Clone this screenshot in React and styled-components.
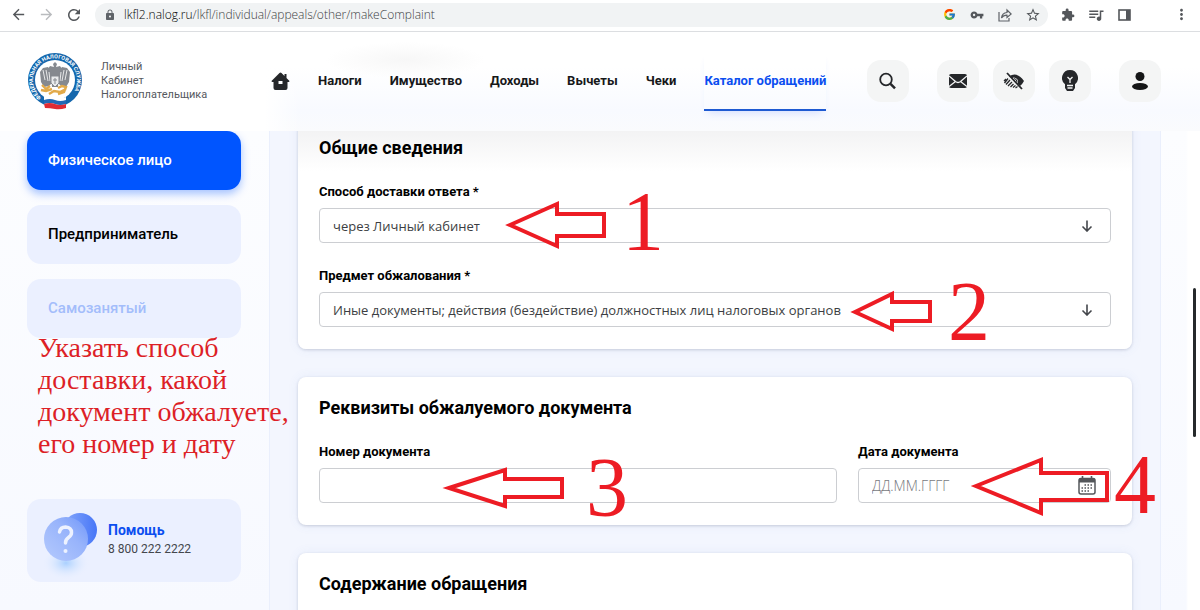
import React from 'react'
import styled, { createGlobalStyle, css } from 'styled-components'
import { FcGoogle } from 'react-icons/fc'
import {
  MdArrowBack,
  MdArrowForward,
  MdRefresh,
  MdLock,
  MdVpnKey,
  MdStarBorder,
  MdExtension,
  MdQueueMusic,
  MdMoreVert
} from 'react-icons/md'

const GlobalStyle = createGlobalStyle`
  * {
    box-sizing: border-box;
  }

  body {
    margin: 0;
    font-family: Roboto, "Liberation Sans", sans-serif;
    color: #000;
    background: #fff;
  }

  button {
    border: 0;
    padding: 0;
    font: inherit;
    color: inherit;
    background: none;
    cursor: pointer;
  }
`

const Page = styled.div`
  position: relative;
  display: flex;
  flex-direction: column;
  height: 100vh;
  overflow: hidden;
`

/* browser bar */

const BrowserBar = styled.div`
  display: flex;
  align-items: center;
  flex: none;
  height: 32px;
  padding: 0 5px 2px 4px;
  border-bottom: 1px solid #dcdee1;
  color: #5f6368;
`

const BarButton = styled.button`
  display: flex;
  align-items: center;
  justify-content: center;
  width: 28px;
  height: 24px;
  color: ${props => props.$faded ? '#b9bbbe' : '#54575b'};
`

const AddressBar = styled.div`
  display: flex;
  align-items: center;
  flex: 1;
  height: 24px;
  margin: 0 6px 0 7px;
  padding-right: 1px;
  border-radius: 12px;
  background: #f1f3f4;

  > svg {
    margin-left: 9px;
  }
`

const AddressInput = styled.div`
  flex: 1;
  margin-left: 8px;
  font: 300 12px "Open Sans", sans-serif;
  color: #3c4043;

  b {
    font-weight: 300;
    color: #000;
  }
`

const MenuButton = styled(BarButton)`
  margin-left: 29px;
`

/* site header */

const Header = styled.header`
  position: relative;
  z-index: 2;
  display: flex;
  align-items: center;
  flex: none;
  height: 99px;
  padding: 0 39px 2px 0;
  background:
    radial-gradient(ellipse 80px 18px at 405px 28px, #f7f7f7, transparent),
    linear-gradient(90deg, #fff 265px, rgba(255, 255, 255, 0) 300px),
    linear-gradient(#fff 35%, #f8faff 80%, #fafbfd);
`

const LogoLink = styled.a`
  display: flex;
  align-items: center;
  gap: 17px;
  flex: none;
  width: 271px;
  padding-left: 27px;
  font-size: 11px;
  line-height: 14px;
  color: #55585e;
  text-decoration: none;
`

const LogoText = styled.span`
  display: flex;
  flex-direction: column;
`

const Nav = styled.nav`
  display: flex;
  align-items: center;
  gap: 28px;
  flex: 1;
`

const NavLink = styled.a`
  display: flex;
  align-items: center;
  height: 60px;
  border-top: 2px solid transparent;
  border-bottom: 2px solid transparent;
  font-size: 13px;
  font-weight: 700;
  white-space: nowrap;
  color: #17181a;
  text-decoration: none;

  ${props => props.$active && css`
    color: #0b4ef0;
    border-bottom-color: #1e5ad2;
    box-shadow: 0 6px 8px -4px rgba(40, 90, 255, 0.16);
  `}
`

const Tools = styled.div`
  display: flex;
  gap: 28px;
`

const ToolGroup = styled.div`
  display: flex;
  gap: 14px;
`

const ToolButton = styled.button`
  display: flex;
  align-items: center;
  justify-content: center;
  width: 42px;
  height: 42px;
  border-radius: 14px;
  background: #f4f5f5;
`

/* body */

const Body = styled.div`
  display: flex;
  flex: 1;
  min-height: 0;
  padding-right: 39px;
  background: linear-gradient(90deg, rgba(255, 255, 255, 0) calc(100% - 14px), #fff calc(100% - 12px)), linear-gradient(#fcfdff, #f7f9ff);
`

const Sidebar = styled.aside`
  display: flex;
  flex-direction: column;
  gap: 15px;
  flex: none;
  width: 269px;
  padding: 0 28px 0 27px;
`

const RoleButton = styled.button`
  height: 59px;
  padding: 0 21px 2px;
  border-radius: 14px;
  font-size: 15px;
  font-weight: 500;
  text-align: left;
  background: #ebf0ff;

  &:disabled {
    color: #a3bdfb;
  }

  ${props => props.$active && css`
    color: #fff;
    background: #0055ff;
    box-shadow: 0 4px 9px rgba(0, 85, 255, 0.35);
  `}
`

const HelpCard = styled.a`
  display: flex;
  align-items: center;
  height: 83px;
  margin-top: 146px;
  padding-left: 15px;
  border-radius: 14px;
  background: #ebf0ff;
  text-decoration: none;
`

const HelpText = styled.span`
  display: flex;
  flex-direction: column;
  padding-bottom: 4px;
  font-size: 12px;
  line-height: 18px;
  color: #44474d;

  b {
    font-size: 14px;
    line-height: 20px;
    color: #0b4ef0;
  }
`

const Content = styled.main`
  flex: 1;
  min-width: 0;
  overflow: hidden;
  padding: 0 28px;
  border: 1px solid #eaeffc;
  border-width: 0 1px;
  background: #f3f6fe;
`

const Cards = styled.form`
  display: flex;
  flex-direction: column;
  gap: 28px;
  margin-top: -14px;
`

const Card = styled.section`
  padding: 19px 21px 22px;
  border-radius: 8px;
  background: #fff;
  box-shadow: 0 1px 3px rgba(50, 60, 90, 0.2), 0 0 12px rgba(80, 110, 200, 0.08);

  &:first-child {
    background: linear-gradient(#f3f3f4 14px, #fff 54px);
  }
`

const CardTitle = styled.h2`
  margin: 0 0 24px;
  font-size: 18px;
  line-height: 24px;
  font-weight: 700;
`

const Fields = styled.div`
  display: flex;
  flex-direction: ${props => props.$inline ? 'row' : 'column'};
  gap: ${props => props.$inline ? '21px' : '25px'};
`

const Field = styled.div`
  display: flex;
  flex-direction: column;
  gap: 8px;
  flex: ${props => props.$width ? `0 0 ${props.$width}` : '1'};
`

const Label = styled.label`
  font-size: 13px;
  line-height: 16px;
  font-weight: 700;
`

const Control = styled.div`
  display: grid;
  align-items: center;

  > * {
    grid-area: 1 / 1;
  }

  > svg {
    justify-self: end;
    margin-right: 15px;
    pointer-events: none;
  }
`

const controlStyle = css`
  width: 100%;
  height: 35px;
  padding: 0 13px;
  border: 1px solid #ccced2;
  border-radius: 4px;
  background: #fff;
  appearance: none;
`

const Input = styled.input`
  ${controlStyle}
  font: 300 14px "Open Sans", sans-serif;

  &::placeholder {
    color: #77797d;
    opacity: 1;
  }
`

const Select = styled.select`
  ${controlStyle}
  font: 13px "Open Sans", sans-serif;
  color: #3c3e42;
`

const ScrollThumb = styled.div`
  position: absolute;
  top: 288px;
  right: 4px;
  width: 3px;
  height: 149px;
  border-radius: 2px;
  background: #26292b;
`

/* red marks over the page */

const Note = styled.p`
  position: absolute;
  z-index: 3;
  top: 332px;
  left: 38px;
  margin: 0;
  font: 28px/32px "Liberation Serif", serif;
  color: #dd1f27;
  white-space: pre-line;
`

const Marks = styled.svg`
  position: absolute;
  z-index: 3;
  top: 0;
  left: 0;
  pointer-events: none;

  polygon {
    fill: none;
    stroke: #ed1c24;
    stroke-width: 4;
  }

  text {
    font: 84px "Liberation Serif", serif;
    fill: #ed1c24;
  }
`

const marks = [
  { digit: 1, x: 622, y: 250, points: '510,225 557,204 557,214 604,214 604,236 557,236 557,246' },
  { digit: 2, x: 948, y: 340, points: '855,312 892,294 892,302 930,302 930,321 892,321 892,329' },
  { digit: 3, x: 586, y: 516, points: '449,488 505,470 505,479 562,479 562,497 505,497 505,506' },
  { digit: 4, x: 1114, y: 513, points: '976,486 1041,460 1041,473 1107,473 1107,500 1041,500 1041,513' }
]

const links = ['Налоги', 'Имущество', 'Доходы', 'Вычеты', 'Чеки', 'Каталог обращений']

const Emblem = () => (
  <svg width="57" height="58" viewBox="0 0 57 58">
    <circle cx="28" cy="28" r="27" fill="#1467ad" />
    <circle cx="28" cy="28" r="20" fill="#fff" />
    <path id="ring" d="M14.200 45.500A22 22 0 1 1 41.800 45.500" fill="none" />
    <text fontSize="5.500" fontWeight="700" fill="#fff">
      <textPath href="#ring">ФЕДЕРАЛЬНАЯ НАЛОГОВАЯ СЛУЖБА</textPath>
    </text>
    <g fill="#85898f">
      <path d="M25 20l-4-5-5 1-3 4 1 10 3 5 5-1 3-3z" />
      <path d="M31 20l4-5 5 1 3 4-1 10-3 5-5-1-3-3z" />
      <path d="M28 10l2 2-1 3 4-1 2 3-3 4-1 14h-6l-1-14-3-4 2-3 4 1-1-3z" />
    </g>
    <path d="M16 18l2 10M19 18l2 11M22 20l1 9M40 18l-2 10M37 18l-2 11M34 20l-1 9" stroke="#fff" strokeWidth="0.8" />
    <path d="M24 24h8v7l-4 4-4-4z" fill="#e8eaec" stroke="#85898f" />
    <path d="M28 26v6M26 28h4" stroke="#85898f" />
    <path d="M15 33l4 4 4-3M14 38l5 1 6-2M22 42l5-3 6 1 6-3M31 36l4-2 4 1-2 5-6 2" fill="none" stroke="#e2aa4a" strokeWidth="2.4" />
    <path d="M17 45q6-2 11 0t11 0v10q-6 3-11 1t-11 0z" fill="#fff" />
    <path d="M17 48q6-2 11 0t11 0v4q-6 2-11 0t-11 0z" fill="#2369b5" />
    <path d="M17 52q6-2 11 0t11 0v4q-6 2-11 1t-10-1z" fill="#df2b33" />
  </svg>
)

const HomeIcon = () => (
  <svg width="19" height="18" viewBox="0 0 18 18" fill="#25272a">
    <path fillRule="evenodd" d="M8 1Q9 0 10 1L13 4V2h2v4l3 3q0 1-1 1h-1v6q0 2-2 2H4q-2 0-2-2v-6H1q-1 0-1-1zM7 9v3h4V9z" />
  </svg>
)

const SearchIcon = () => (
  <svg width="18" height="18" viewBox="0 0 18 18" fill="none" stroke="#25272a" strokeWidth="1.8">
    <circle cx="7" cy="7.500" r="5.800" />
    <path d="M11.500 11.800l4.500 4.500" strokeWidth="2.400" />
  </svg>
)

const MailIcon = () => (
  <svg width="18" height="14" viewBox="0 0 18 14">
    <rect width="18" height="14" rx="2" fill="#25272a" />
    <path d="M0 2l6.5 5.5q2.5 2 5 0L18 2M0 12.5l6.5-5M18 12.5l-6.5-5" fill="none" stroke="#f4f5f5" strokeWidth="1.3" />
  </svg>
)

const EyeIcon = () => (
  <svg width="22" height="18" viewBox="0 0 22 18" fill="none" stroke="#25272a">
    <path d="M6 4.5Q14-1 21 9q-1.500 3-4 5l-2.500-2.500q1.500-4-2-5.500Q10.500 5 9 6.500z" fill="#25272a" stroke="none" />
    <path d="M1 9l2-2M1.500 11L5 6.500M3 12.500L7 8M5 14l4-4M7.500 15l3-3M10 15.500l2.500-2M12.500 16l2-1.500" strokeWidth="1.300" />
    <path d="M4 1l15 16" strokeWidth="1.800" />
    <path d="M11 6.500q3 .5 3 3.500" strokeWidth="1" />
  </svg>
)

const BulbIcon = () => (
  <svg width="16" height="22" viewBox="0 0 16 22">
    <path d="M8 0a8 8 0 0 1 5 14.200V18l-2 3H5l-2-3v-3.800A8 8 0 0 1 8 0z" fill="#25272a" />
    <path d="M5.500 7L8 9.500 10.500 7M8 9.500V13M5 15.500h6M5.500 18h5" fill="none" stroke="#f4f5f5" strokeWidth="1.300" />
  </svg>
)

const PersonIcon = () => (
  <svg width="18" height="18" viewBox="0 0 18 18" fill="#151617">
    <circle cx="9" cy="4.500" r="4.500" />
    <ellipse cx="9" cy="14.500" rx="8" ry="3.500" />
  </svg>
)

const ShareIcon = () => (
  <svg width="14" height="14" viewBox="0 0 14 14" fill="none" stroke="#5f6368" strokeWidth="1.200">
    <path d="M1 4v9h10v-3" />
    <path d="M3.500 10Q4 5 9 4.500V2l4.200 4L9 9.500V7.200Q5.500 7 3.500 10z" />
  </svg>
)

const PanelIcon = () => (
  <svg width="13" height="12" viewBox="0 0 13 12">
    <rect x="1" y="1" width="11" height="10" fill="none" stroke="#54575b" strokeWidth="1.600" />
    <rect x="8" y="1" width="4" height="10" fill="#54575b" />
  </svg>
)

const DownIcon = () => (
  <svg width="18" height="12" viewBox="0 0 18 12" fill="none" stroke="#44474c" strokeWidth="1.600">
    <path d="M9 0.500v10.500M4.500 6.500L9 11l4.500-4.500" />
  </svg>
)

const CalendarIcon = () => (
  <svg width="18" height="19" viewBox="0 0 18 19" fill="none" stroke="#54575b">
    <rect x="1" y="2.500" width="16" height="15.500" rx="2" strokeWidth="1.500" />
    <path d="M1 4.500h16" strokeWidth="4" />
    <path d="M4.500 0v4M13.500 0v4" strokeWidth="1.600" />
    <path d="M6.500 9h9M3.500 12h12M3.500 15h8" strokeWidth="1.500" strokeDasharray="1.500 1.500" />
  </svg>
)

const HelpIcon = () => (
  <svg width="66" height="83" viewBox="0 0 66 83">
    <defs>
      <linearGradient id="back" x1="0" x2="1">
        <stop offset="0" stopColor="#86a8fb" />
        <stop offset="1" stopColor="#4776f7" />
      </linearGradient>
      <linearGradient id="front" x1="0" y1="1" x2="1" y2="0">
        <stop offset="0" stopColor="#b5cafd" />
        <stop offset="0.600" stopColor="#98b4fb" />
        <stop offset="1" stopColor="#6f96fa" />
      </linearGradient>
      <radialGradient id="glow">
        <stop offset="0" stopColor="#a9d0ff" />
        <stop offset="1" stopColor="#ebf0ff" stopOpacity="0" />
      </radialGradient>
    </defs>
    <ellipse cx="24" cy="64" rx="24" ry="17" fill="url(#glow)" />
    <circle cx="38" cy="31" r="17" fill="url(#back)" />
    <circle cx="24" cy="40" r="22" fill="url(#front)" />
    <path d="M17.500 33q1-5 6-5 6 .5 6 5.500 0 3-3 5t-3 5.500" fill="none" stroke="#edf2ff" strokeWidth="3.500" strokeLinecap="round" />
    <circle cx="23.500" cy="52" r="2" fill="#edf2ff" />
  </svg>
)

const App = () => (
  <>
    <GlobalStyle />
    <Page>
      <BrowserBar>
        <BarButton aria-label="Назад"><MdArrowBack size={17} /></BarButton>
        <BarButton aria-label="Вперёд" $faded><MdArrowForward size={17} /></BarButton>
        <BarButton aria-label="Обновить"><MdRefresh size={18} /></BarButton>
        <AddressBar>
          <MdLock size={12} />
          <AddressInput><b>lkfl2.nalog.ru</b>/lkfl/individual/appeals/other/makeComplaint</AddressInput>
          <BarButton aria-label="Google"><FcGoogle size={13} /></BarButton>
          <BarButton aria-label="Пароли"><MdVpnKey size={14} /></BarButton>
          <BarButton aria-label="Поделиться"><ShareIcon /></BarButton>
          <BarButton aria-label="В закладки"><MdStarBorder size={16} /></BarButton>
        </AddressBar>
        <BarButton aria-label="Расширения"><MdExtension size={14} /></BarButton>
        <BarButton aria-label="Медиа"><MdQueueMusic size={18} /></BarButton>
        <BarButton aria-label="Боковая панель"><PanelIcon /></BarButton>
        <MenuButton aria-label="Меню"><MdMoreVert size={17} /></MenuButton>
      </BrowserBar>

      <Header>
        <LogoLink href="#">
          <Emblem />
          <LogoText>
            <span>Личный</span>
            <span>Кабинет</span>
            <span>Налогоплательщика</span>
          </LogoText>
        </LogoLink>
        <Nav>
          <NavLink href="#" aria-label="Главная"><HomeIcon /></NavLink>
          {links.map(link => (
            <NavLink href="#" key={link} $active={link === 'Каталог обращений'}>{link}</NavLink>
          ))}
        </Nav>
        <Tools>
          <ToolButton aria-label="Поиск"><SearchIcon /></ToolButton>
          <ToolGroup>
            <ToolButton aria-label="Сообщения"><MailIcon /></ToolButton>
            <ToolButton aria-label="Версия для слабовидящих"><EyeIcon /></ToolButton>
            <ToolButton aria-label="Подсказки"><BulbIcon /></ToolButton>
          </ToolGroup>
          <ToolButton aria-label="Профиль"><PersonIcon /></ToolButton>
        </Tools>
      </Header>

      <Body>
        <Sidebar>
          <RoleButton $active>Физическое лицо</RoleButton>
          <RoleButton>Предприниматель</RoleButton>
          <RoleButton disabled>Самозанятый</RoleButton>
          <HelpCard href="tel:88002222222">
            <HelpIcon />
            <HelpText>
              <b>Помощь</b>
              <span>8 800 222 2222</span>
            </HelpText>
          </HelpCard>
        </Sidebar>

        <Content>
          <Cards>
            <Card>
              <CardTitle>Общие сведения</CardTitle>
              <Fields>
                <Field>
                  <Label htmlFor="delivery">Способ доставки ответа *</Label>
                  <Control>
                    <Select id="delivery">
                      <option>через Личный кабинет</option>
                    </Select>
                    <DownIcon />
                  </Control>
                </Field>
                <Field>
                  <Label htmlFor="subject">Предмет обжалования *</Label>
                  <Control>
                    <Select id="subject">
                      <option>Иные документы; действия (бездействие) должностных лиц налоговых органов</option>
                    </Select>
                    <DownIcon />
                  </Control>
                </Field>
              </Fields>
            </Card>

            <Card>
              <CardTitle>Реквизиты обжалуемого документа</CardTitle>
              <Fields $inline>
                <Field>
                  <Label htmlFor="number">Номер документа</Label>
                  <Input id="number" />
                </Field>
                <Field $width="253px">
                  <Label htmlFor="date">Дата документа</Label>
                  <Control>
                    <Input id="date" placeholder="ДД.ММ.ГГГГ" />
                    <CalendarIcon />
                  </Control>
                </Field>
              </Fields>
            </Card>

            <Card>
              <CardTitle>Содержание обращения</CardTitle>
            </Card>
          </Cards>
        </Content>
      </Body>

      <ScrollThumb />
      <Note>{'Указать способ\nдоставки, какой\nдокумент обжалуете,\nего номер и дату'}</Note>
      <Marks width="1200" height="610">
        {marks.map(({ digit, x, y, points }) => (
          <g key={digit}>
            <polygon points={points} />
            <text x={x} y={y}>{digit}</text>
          </g>
        ))}
      </Marks>
    </Page>
  </>
)

export default App
